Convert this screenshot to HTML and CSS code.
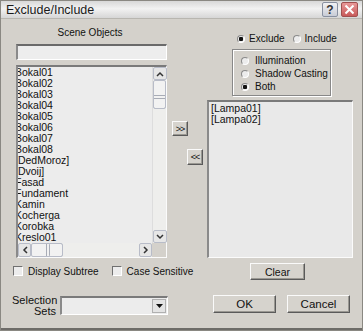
FILE: index.html
```html
<!DOCTYPE html>
<html lang="en">
<head>
    <meta charset="UTF-8">
    <title>Exclude/Include</title>
    <link rel="stylesheet" href="styles.css">
</head>
<body>
    <div class="dialog">
        <div class="titlebar">
            <span class="title">Exclude/Include</span>
            <div class="caption-btns">
                <span class="cap help">?</span>
                <span class="cap close">
                    <svg width="11" height="11" viewBox="0 0 11 11"><path d="M1.5 1.5 L9.5 9.5 M9.5 1.5 L1.5 9.5" stroke="#fff" stroke-width="2"/></svg>
                </span>
            </div>
        </div>

        <div class="body">
            <!-- left: scene objects -->
            <div class="left">
                <div class="scene-label">Scene Objects</div>
                <div class="search"></div>
                <div class="list scene-list">
                    <div class="items">
                        <div>Bokal01</div>
                        <div>Bokal02</div>
                        <div>Bokal03</div>
                        <div>Bokal04</div>
                        <div>Bokal05</div>
                        <div>Bokal06</div>
                        <div>Bokal07</div>
                        <div>Bokal08</div>
                        <div>[DedMoroz]</div>
                        <div>[Dvoij]</div>
                        <div>Fasad</div>
                        <div>Fundament</div>
                        <div>Kamin</div>
                        <div>Kocherga</div>
                        <div>Korobka</div>
                        <div>Kreslo01</div>
                    </div>
                    <div class="vscroll">
                        <span class="sb-btn">
                            <svg width="8" height="6" viewBox="0 0 8 6"><path d="M1 5 L4 2 L7 5" fill="none" stroke="#333" stroke-width="1.5"/></svg>
                        </span>
                        <span class="sb-thumb v"></span>
                        <span class="sb-track"></span>
                        <span class="sb-btn">
                            <svg width="8" height="6" viewBox="0 0 8 6"><path d="M1 1 L4 4 L7 1" fill="none" stroke="#333" stroke-width="1.5"/></svg>
                        </span>
                    </div>
                    <div class="hscroll">
                        <span class="sb-btn">
                            <svg width="6" height="8" viewBox="0 0 6 8"><path d="M5 1 L2 4 L5 7" fill="none" stroke="#333" stroke-width="1.5"/></svg>
                        </span>
                        <span class="sb-thumb h"></span>
                        <span class="sb-track"></span>
                        <span class="sb-btn">
                            <svg width="6" height="8" viewBox="0 0 6 8"><path d="M1 1 L4 4 L1 7" fill="none" stroke="#333" stroke-width="1.5"/></svg>
                        </span>
                    </div>
                    <div class="corner"></div>
                </div>

                <div class="checks">
                    <label class="check"><span class="box"></span>Display Subtree</label>
                    <label class="check second"><span class="box"></span>Case Sensitive</label>
                </div>

                <div class="selsets">
                    <div class="sel-label">Selection<br>Sets</div>
                    <div class="combo">
                        <span class="combo-btn">
                            <svg width="7" height="4" viewBox="0 0 7 4"><path d="M0 0 H7 L3.5 4 Z" fill="#111"/></svg>
                        </span>
                    </div>
                </div>
            </div>

            <!-- middle: move buttons -->
            <div class="middle">
                <span class="btn move add">&gt;&gt;</span>
                <span class="btn move remove">&lt;&lt;</span>
            </div>

            <!-- right: exclude list -->
            <div class="right">
                <div class="mode">
                    <span class="radio on"></span><span class="mode-label">Exclude</span>
                    <span class="radio"></span><span class="mode-label">Include</span>
                </div>
                <div class="group">
                    <div class="opt"><span class="radio"></span>Illumination</div>
                    <div class="opt"><span class="radio"></span>Shadow Casting</div>
                    <div class="opt"><span class="radio on"></span>Both</div>
                </div>
                <div class="list excl-list">
                    <div>[Lampa01]</div>
                    <div>[Lampa02]</div>
                </div>
                <span class="btn clear">Clear</span>
                <div class="actions">
                    <span class="btn action">OK</span>
                    <span class="btn action">Cancel</span>
                </div>
            </div>
        </div>
    </div>
</body>
</html>
```

FILE: styles.css
```css
* {
    margin: 0;
    padding: 0;
    box-sizing: border-box;
}

body {
    font-family: 'Liberation Sans', Arial, sans-serif;
    font-size: 10px;
    color: #111;
    background: #d4d1cb;
    white-space: nowrap;
}

.dialog {
    width: 363px;
    height: 331px;
    background: #d4d1cb;
    border: 1px solid #8a8882;
    padding: 0 2px 3px 2px;
    box-shadow: inset 0 -2px 0 #6e6c68;
}

.titlebar {
    height: 18px;
    display: flex;
    align-items: center;
    justify-content: space-between;
    background: linear-gradient(#d8d8d8, #f2f2f2 45%, #d6d6d6);
    border-bottom: 1px solid #b8b6b0;
    margin: 0 -2px;
    padding: 0 4px 0 5px;
}

.title {
    font-size: 12.5px;
    color: #1a1a1a;
}

.caption-btns {
    display: flex;
    gap: 3px;
}

.cap {
    width: 16px;
    height: 15px;
    display: flex;
    align-items: center;
    justify-content: center;
    border: 1px solid #8890a0;
    border-radius: 2px;
}

.help {
    background: linear-gradient(#f2f2f4, #c8ccd6);
    font-size: 12px;
    font-weight: bold;
    color: #333;
}

.close {
    width: 17px;
    background: linear-gradient(#e89898, #c85a5a);
    border-color: #a05050;
}

.body {
    display: grid;
    grid-template-columns: 158px 36px 149px;
    padding-left: 9px;
}

/* left column */
.scene-label {
    margin-top: 8px;
    height: 12px;
    line-height: 12px;
    text-align: center;
    padding-right: 2px;
}

.search {
    margin: 5px 0 0 4px;
    width: 151px;
    height: 16px;
    background: #ededed;
    border-top: 2px solid #6a6a6a;
    border-left: 2px solid #8a8a8a;
    border-right: 1px solid #fff;
    border-bottom: 1px solid #fff;
}

.list {
    background: #ececec;
    border-top: 2px solid #7a7a7a;
    border-left: 2px solid #8a8a8a;
    border-right: 1px solid #fbfbfb;
    border-bottom: 1px solid #fbfbfb;
    font-size: 10.5px;
}

.scene-list {
    margin: 5px 0 0 4px;
    width: 151px;
    height: 193px;
    display: grid;
    grid-template-columns: 1fr 14px;
    grid-template-rows: 1fr 14px;
}

.items {
    overflow: hidden;
    line-height: 11px;
}

.items div {
    margin-left: -3px;
    height: 11px;
}

.vscroll,
.hscroll {
    display: flex;
    background: #eeeeec;
}

.vscroll {
    flex-direction: column;
    border-left: 1px solid #ddd;
}

.sb-btn {
    width: 14px;
    height: 13px;
    display: flex;
    align-items: center;
    justify-content: center;
    background: #e6e6e6;
    border: 1px solid #b8bcc8;
    border-radius: 2px;
}

.hscroll .sb-btn {
    width: 13px;
    height: 14px;
}

.sb-track {
    flex: 1;
}

.sb-thumb {
    border: 1px solid #b8bcc8;
    border-radius: 2px;
}

.sb-thumb.v {
    height: 29px;
    background-image: repeating-linear-gradient(#f2f2f2 0 2px, #a8acb6 2px 3px);
    box-shadow: inset 0 12px 0 #f2f2f2, inset 0 -8px 0 #f2f2f2;
}

.sb-thumb.h {
    width: 32px;
    background-image: repeating-linear-gradient(90deg, #f2f2f2 0 2px, #a8acb6 2px 3px);
    box-shadow: inset 12px 0 0 #f2f2f2, inset -12px 0 0 #f2f2f2;
}

.corner {
    background: #d4d1cb;
}

.checks {
    margin-top: 7px;
    height: 12px;
    display: flex;
    align-items: center;
}

.check {
    display: flex;
    align-items: center;
    margin-left: 1px;
}

.check.second {
    margin-left: 13px;
}

.box {
    width: 10px;
    height: 10px;
    background: #ececec;
    border-top: 1px solid #707070;
    border-left: 1px solid #707070;
    border-right: 1px solid #fff;
    border-bottom: 1px solid #fff;
    margin-right: 5px;
}

.selsets {
    margin-top: 16px;
    display: flex;
    align-items: flex-start;
}

.sel-label {
    width: 44px;
    text-align: right;
    line-height: 11px;
    margin-top: 2px;
    font-size: 11px;
}

.combo {
    margin: 3px 0 0 4px;
    width: 108px;
    height: 19px;
    background: #ececec;
    border-top: 2px solid #7a7a7a;
    border-left: 2px solid #8a8a8a;
    border-right: 1px solid #fff;
    border-bottom: 1px solid #fff;
    display: flex;
    justify-content: flex-end;
    padding: 1px;
}

.combo-btn {
    width: 14px;
    display: flex;
    align-items: center;
    justify-content: center;
    background: #e4e4e4;
    border: 1px solid #b0b0b0;
}

/* buttons */
.btn {
    display: flex;
    align-items: center;
    justify-content: center;
    background: #d6d3cd;
    border-top: 1px solid #fafafa;
    border-left: 1px solid #fafafa;
    border-right: 1px solid #5a5a5a;
    border-bottom: 1px solid #5a5a5a;
    box-shadow: inset -1px -1px 0 #9a9892;
    font-size: 10.5px;
}

.middle {
    display: flex;
    flex-direction: column;
    align-items: flex-start;
}

.move {
    font-size: 9px;
    letter-spacing: -1px;
}

.add {
    margin: 102px 0 0 2px;
    width: 16px;
    height: 15px;
}

.remove {
    margin: 13px 0 0 17px;
    width: 16px;
    height: 16px;
}

/* right column */
.mode {
    margin-top: 14px;
    height: 11px;
    display: flex;
    align-items: center;
    padding-left: 31px;
}

.mode-label {
    margin: 0 8px 0 4px;
}

.radio {
    width: 8px;
    height: 8px;
    border-radius: 50%;
    background: #ececec;
    border: 1px solid #8a8a8a;
    border-right-color: #fff;
    border-bottom-color: #fff;
    flex: none;
}

.radio.on {
    background: radial-gradient(circle, #111 0 2px, #ececec 2.5px);
}

.group {
    margin: 5px 0 0 26px;
    width: 99px;
    height: 47px;
    border: 1px solid #888;
    box-shadow: 1px 1px 0 #fff, inset 1px 1px 0 #fff;
    padding: 4px 0 0 8px;
}

.opt {
    height: 13px;
    display: flex;
    align-items: center;
}

.opt .radio {
    margin-right: 6px;
}

.excl-list {
    margin: 4px 0 0 1px;
    width: 146px;
    height: 158px;
    line-height: 11px;
    padding: 1px 0 0 2px;
    background: #e9e9e9;
}

.clear {
    margin: 5px 0 0 44px;
    width: 55px;
    height: 17px;
}

.actions {
    margin: 15px 0 0 7px;
    display: flex;
    gap: 11px;
}

.action {
    width: 63px;
    height: 18px;
    font-size: 11.5px;
}
```
